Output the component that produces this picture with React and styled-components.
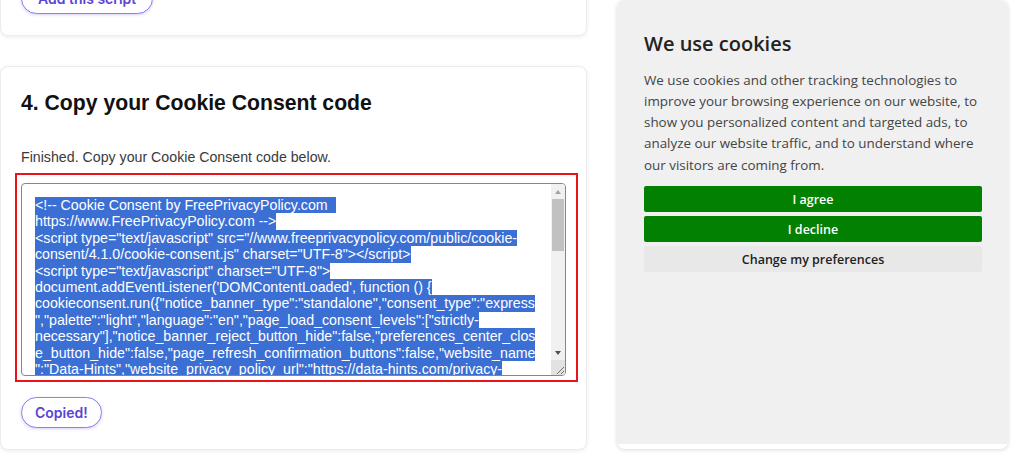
import React from 'react'
import styled, { createGlobalStyle } from 'styled-components'

const codeLines = [
  '<!-- Cookie Consent by FreePrivacyPolicy.com  ',
  'https://www.FreePrivacyPolicy.com -->',
  '<script type="text/javascript" src="//www.freeprivacypolicy.com/public/cookie-',
  'consent/4.1.0/cookie-consent.js" charset="UTF-8"></script>',
  '<script type="text/javascript" charset="UTF-8">',
  "document.addEventListener('DOMContentLoaded', function () {",
  'cookieconsent.run({"notice_banner_type":"standalone","consent_type":"express',
  '","palette":"light","language":"en","page_load_consent_levels":["strictly-',
  'necessary"],"notice_banner_reject_button_hide":false,"preferences_center_clos',
  'e_button_hide":false,"page_refresh_confirmation_buttons":false,"website_name',
  '":"Data-Hints","website_privacy_policy_url":"https://data-hints.com/privacy-',
]

const App = () => {
  return (
    <>
      <GlobalStyle />
      <Page>
        <LeftColumn>
          <FirstCard>
            <PillButton>Add this script</PillButton>
          </FirstCard>
          <Card>
            <Title>4. Copy your Cookie Consent code</Title>
            <Lead>Finished. Copy your Cookie Consent code below.</Lead>
            <RedMark>
              <CodeBox>
                <CodeText>
                  {codeLines.map((line, i) => (
                    <CodeLine key={i}>
                      <Selected>{line}</Selected>
                    </CodeLine>
                  ))}
                </CodeText>
                <Scrollbar>
                  <ArrowCell>
                    <Arrow $dir="up" />
                  </ArrowCell>
                  <Thumb />
                  <Track />
                  <ArrowCell>
                    <Arrow $dir="down" />
                  </ArrowCell>
                  <Resizer>
                    <svg width="11" height="11" viewBox="0 0 11 11">
                      <path d="M10 3 L3 10 M10 7 L7 10" stroke="#6e6e6e" strokeWidth="1" fill="none" />
                    </svg>
                  </Resizer>
                </Scrollbar>
              </CodeBox>
            </RedMark>
            <CopiedButton>Copied!</CopiedButton>
          </Card>
        </LeftColumn>

        <Banner>
          <BannerInner>
            <BannerTitle>We use cookies</BannerTitle>
            <BannerText>
              We use cookies and other tracking technologies to improve your browsing
              experience on our website, to show you personalized content and targeted
              ads, to analyze our website traffic, and to understand where our visitors
              are coming from.
            </BannerText>
            <ButtonStack>
              <ConsentButton $primary>I agree</ConsentButton>
              <ConsentButton $primary>I decline</ConsentButton>
              <ConsentButton>Change my preferences</ConsentButton>
            </ButtonStack>
          </BannerInner>
        </Banner>
      </Page>
    </>
  )
}

const GlobalStyle = createGlobalStyle`
html, body {
  margin: 0;
  padding: 0;
  background: #fff;
  overflow: hidden;
}
body {
  font-family: "Liberation Sans", Arial, sans-serif;
}
`

const Page = styled.div`
display: flex;
align-items: flex-start;
gap: 30px;
width: 1024px;
height: 458px;
padding-right: 16px;
box-sizing: border-box;
overflow: hidden;
`

const LeftColumn = styled.div`
display: flex;
flex-direction: column;
gap: 30px;
width: 587px;
flex-shrink: 0;
margin-top: -38px;
`

const Card = styled.section`
display: flex;
flex-direction: column;
align-items: flex-start;
background: #fff;
border: 1px solid #ececec;
border-radius: 8px;
box-shadow: 0 1px 4px rgba(0, 0, 0, 0.08);
padding: 24px 20px 21px;
`

const FirstCard = styled(Card)`
padding: 20px 20px 21px;
`

const Title = styled.h2`
margin: 0;
font-family: "Liberation Sans", Arial, sans-serif;
font-size: 21.2px;
line-height: 24px;
font-weight: 700;
color: #111;
`

const Lead = styled.p`
margin: 34px 0 0;
font-size: 14.2px;
line-height: 17px;
color: #3a3a3a;
`

const RedMark = styled.div`
align-self: stretch;
margin: 7px -12px 0 -6px;
padding: 8px 10px 4px 4px;
border: 2px solid #e8141a;
`

const CodeBox = styled.div`
display: flex;
height: 193px;
box-sizing: border-box;
border: 1px solid #85858f;
border-radius: 4px;
background: #fff;
overflow: hidden;
`

const CodeText = styled.div`
flex: 1;
min-width: 0;
padding: 13px 0 0 13px;
overflow: hidden;
font-family: "Liberation Sans", Arial, sans-serif;
font-size: 14.2px;
`

const CodeLine = styled.div`
height: 16.4px;
white-space: pre;
`

const Selected = styled.span`
display: inline-block;
line-height: 16.4px;
background: #3b6fd4;
color: #fff;
`

const Scrollbar = styled.div`
display: flex;
flex-direction: column;
width: 14px;
flex-shrink: 0;
background: #f1f1f1;
`

const ArrowCell = styled.div`
display: flex;
align-items: center;
justify-content: center;
height: 15px;
`

const Arrow = styled.div`
width: 0;
height: 0;
border-left: 3.5px solid transparent;
border-right: 3.5px solid transparent;
${({ $dir }) =>
  $dir === 'up'
    ? 'border-bottom: 4px solid #a3a3a3;'
    : 'border-top: 4px solid #505050;'}
`

const Thumb = styled.div`
height: 52px;
margin: 0 1px;
background: #c1c1c1;
`

const Track = styled.div`
flex: 1;
`

const Resizer = styled.div`
display: flex;
align-items: flex-end;
justify-content: flex-end;
height: 15px;
background: #e2e2e2;
`

const PillButton = styled.button`
height: 31px;
padding: 0 16px;
border: 1px solid #8f7ff0;
border-radius: 999px;
background: #fff;
box-shadow: 0 1px 3px rgba(98, 72, 220, 0.25);
font-family: Inter, "Liberation Sans", sans-serif;
font-size: 14px;
font-weight: 600;
color: #5b43d6;
cursor: pointer;
`

const CopiedButton = styled(PillButton)`
margin-top: 15px;
padding: 0 13px;
`

const Banner = styled.aside`
display: flex;
flex-direction: column;
width: 391px;
height: 449px;
flex-shrink: 0;
box-sizing: border-box;
padding-bottom: 5px;
background: #fff;
border-radius: 8px;
box-shadow: 0 1px 4px rgba(0, 0, 0, 0.15);
overflow: hidden;
`

const BannerInner = styled.div`
flex: 1;
display: flex;
flex-direction: column;
padding: 32px 24px 0 27px;
background: #f0f0f0;
font-family: "Open Sans", "Noto Sans", sans-serif;
`

const BannerTitle = styled.h3`
margin: 0;
font-size: 20px;
line-height: 24px;
font-weight: 600;
color: #222;
`

const BannerText = styled.p`
margin: 13.5px 0 0;
font-size: 13.4px;
line-height: 21.3px;
color: #444;
`

const ButtonStack = styled.div`
display: flex;
flex-direction: column;
gap: 3.5px;
margin-right: 2px;
margin-top: 10px;
`

const ConsentButton = styled.button`
height: 26.5px;
border: none;
border-radius: 2px;
background: ${({ $primary }) => ($primary ? '#028002' : '#e8e8e8')};
color: ${({ $primary }) => ($primary ? '#fff' : '#222')};
font-family: "Open Sans", "Noto Sans", sans-serif;
font-size: 12.5px;
font-weight: 600;
cursor: pointer;
`

export default App
